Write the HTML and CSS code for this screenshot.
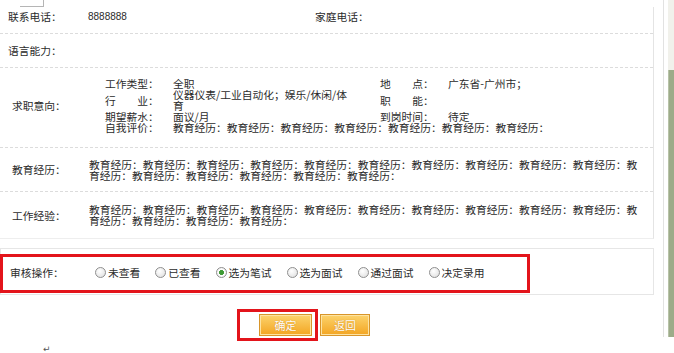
FILE: index.html
```html
<!DOCTYPE html>
<html lang="zh-CN">
<head>
  <meta charset="UTF-8" />
  <title>简历详情</title>
  <link rel="stylesheet" href="styles.css">
</head>
<body>

  <div class="page">
    <div class="doc">
      <div class="photo-corner"></div>

      <div class="info">
        <div class="row row-contact">
          <div class="label">联系电话：</div>
          <div class="phone">8888888</div>
          <div class="label label-home">家庭电话：</div>
        </div>

        <div class="row row-lang">
          <div class="label">语言能力：</div>
        </div>

        <div class="row row-intent">
          <div class="label">求职意向：</div>
          <div class="intent">
            <span class="sub-label">工作类型：</span>
            <span class="sub-value">全职</span>
            <span class="sub-label">地　　点：</span>
            <span>广东省-广州市；</span>

            <span class="sub-label">行　　业：</span>
            <span class="sub-value">仪器仪表/工业自动化；娱乐/休闲/体育</span>
            <span class="sub-label">职　　能：</span>
            <span></span>

            <span class="sub-label">期望薪水：</span>
            <span class="sub-value">面议/月</span>
            <span class="sub-label">到岗时间：</span>
            <span>待定</span>

            <span class="sub-label">自我评价：</span>
            <span class="sub-wide">教育经历：教育经历：教育经历：教育经历：教育经历：教育经历：教育经历：</span>
          </div>
        </div>

        <div class="row row-text">
          <div class="label">教育经历：</div>
          <div class="text">教育经历：教育经历：教育经历：教育经历：教育经历：教育经历：教育经历：教育经历：教育经历：教育经历：教育经历：教育经历：教育经历：教育经历：教育经历：教育经历：</div>
        </div>

        <div class="row row-text row-last">
          <div class="label">工作经验：</div>
          <div class="text">教育经历：教育经历：教育经历：教育经历：教育经历：教育经历：教育经历：教育经历：教育经历：教育经历：教育经历：教育经历：教育经历：教育经历：</div>
        </div>
      </div>

      <div class="review">
        <div class="review-mark">
          <div class="review-label">审核操作：</div>
          <label class="opt"><input type="radio" name="status"><span>未查看</span></label>
          <label class="opt"><input type="radio" name="status"><span>已查看</span></label>
          <label class="opt"><input type="radio" name="status" checked><span>选为笔试</span></label>
          <label class="opt"><input type="radio" name="status"><span>选为面试</span></label>
          <label class="opt"><input type="radio" name="status"><span>通过面试</span></label>
          <label class="opt"><input type="radio" name="status"><span>决定录用</span></label>
        </div>
      </div>

      <div class="actions">
        <div class="action-mark">
          <button class="btn">确定</button>
        </div>
        <button class="btn">返回</button>
      </div>

      <div class="para-mark">↵</div>
    </div>

    <div class="margin-line"></div>
    <div class="scrollbar"><div class="thumb"></div></div>
  </div>

</body>
</html>
```

FILE: styles.css
```css
* {
  box-sizing: border-box;
}

body {
  margin: 0;
  font-family: "Noto Sans CJK SC", "Noto Sans", sans-serif;
  font-size: 10.75px;
  line-height: 11px;
  color: #2b2b2b;
  background: #fff;
  overflow: hidden;
}

.page {
  display: flex;
  width: 674px;
  height: 353px;
}

.doc {
  width: 654px;
  flex-shrink: 0;
}

.photo-corner {
  width: 24px;
  height: 7px;
  margin-left: 20px;
  border-right: 1px solid #b5b5b5;
  border-bottom: 1px solid #b5b5b5;
}

/* info table */
.info {
  border-right: 1px solid #e4e4e4;
  border-bottom: 1px solid #eeeeee;
}

.row {
  display: flex;
  align-items: center;
  border-bottom: 1px dashed #dcdcdc;
}

.label {
  width: 88px;
  flex-shrink: 0;
  padding-left: 12px;
  white-space: nowrap;
}

.row-contact {
  height: 27px;
  align-items: flex-start;
  padding-top: 4px;
}

.row-contact .label,
.row-lang .label {
  padding-left: 8px;
}

.row-contact .label-home {
  padding-left: 0;
}

.phone {
  width: 227px;
  font-family: "Liberation Sans", sans-serif;
  font-size: 10px;
}

.row-lang {
  height: 34px;
}

.row-intent {
  height: 80px;
  padding-bottom: 4px;
}

.intent {
  display: grid;
  grid-template-columns: 68px 207px 68px auto;
  align-items: center;
  margin-left: 17px;
}

.sub-label {
  white-space: nowrap;
}

.sub-value {
  padding-right: 27px;
}

.sub-wide {
  grid-column: 2 / 5;
  white-space: nowrap;
}

.row-text {
  height: 44px;
}

.row-text .text {
  width: 553px;
  padding-left: 1px;
}

.row-last {
  height: 46px;
  border-bottom: none;
}

/* review */
.review {
  margin-top: 9px;
  height: 47px;
  border: 1px solid #e6e6e6;
}

.review-mark {
  display: flex;
  align-items: center;
  gap: 15px;
  width: 530px;
  height: 39px;
  margin-top: 5px;
  margin-left: -1px;
  padding: 0 0 3px 7px;
  border: 3px solid #e3141b;
}

.review-label {
  width: 70px;
}

.opt {
  display: flex;
  align-items: center;
  gap: 2px;
}

.opt input {
  appearance: none;
  width: 11px;
  height: 11px;
  margin: 0;
  border: 1px solid #8f8f8f;
  border-radius: 50%;
  background: radial-gradient(circle at 40% 35%, #ffffff, #dcdcdc);
}

.opt input:checked {
  background: radial-gradient(circle, #3e9a34 0 2.2px, #ffffff 2.8px, #e2e2e2);
}

/* buttons */
.actions {
  display: flex;
  align-items: center;
  gap: 2px;
  margin-top: 14px;
  margin-left: 237px;
}

.action-mark {
  width: 81px;
  height: 32px;
  padding: 2px 0 0 19px;
  border: 3px solid #e3141b;
}

.btn {
  width: 53px;
  height: 22px;
  padding: 0;
  font-family: inherit;
  font-size: 11px;
  color: #fff;
  border: 1px solid #d8952a;
  background: linear-gradient(#fcd36c, #f3a522);
  box-shadow: inset 0 0 0 1px #fde3a2;
  text-shadow: 0 0 1px #c77a10;
  cursor: pointer;
}

.actions > .btn {
  width: 50px;
}

.para-mark {
  margin: 4px 0 0 43px;
  font-family: "DejaVu Sans", sans-serif;
  font-size: 9px;
  line-height: 9px;
  color: #555;
}

/* right edge of the window */
.margin-line {
  width: 1px;
  height: 337px;
  margin-left: 9px;
  background: #e2e2e2;
}

.scrollbar {
  display: flex;
  flex-direction: column;
  width: 6px;
  height: 337px;
  margin-left: 4px;
  padding-top: 70px;
  background: #f1f1eb;
}

.thumb {
  flex: 1;
  background: #9dab89;
  border-left: 1px solid #b8c3a8;
}
```
